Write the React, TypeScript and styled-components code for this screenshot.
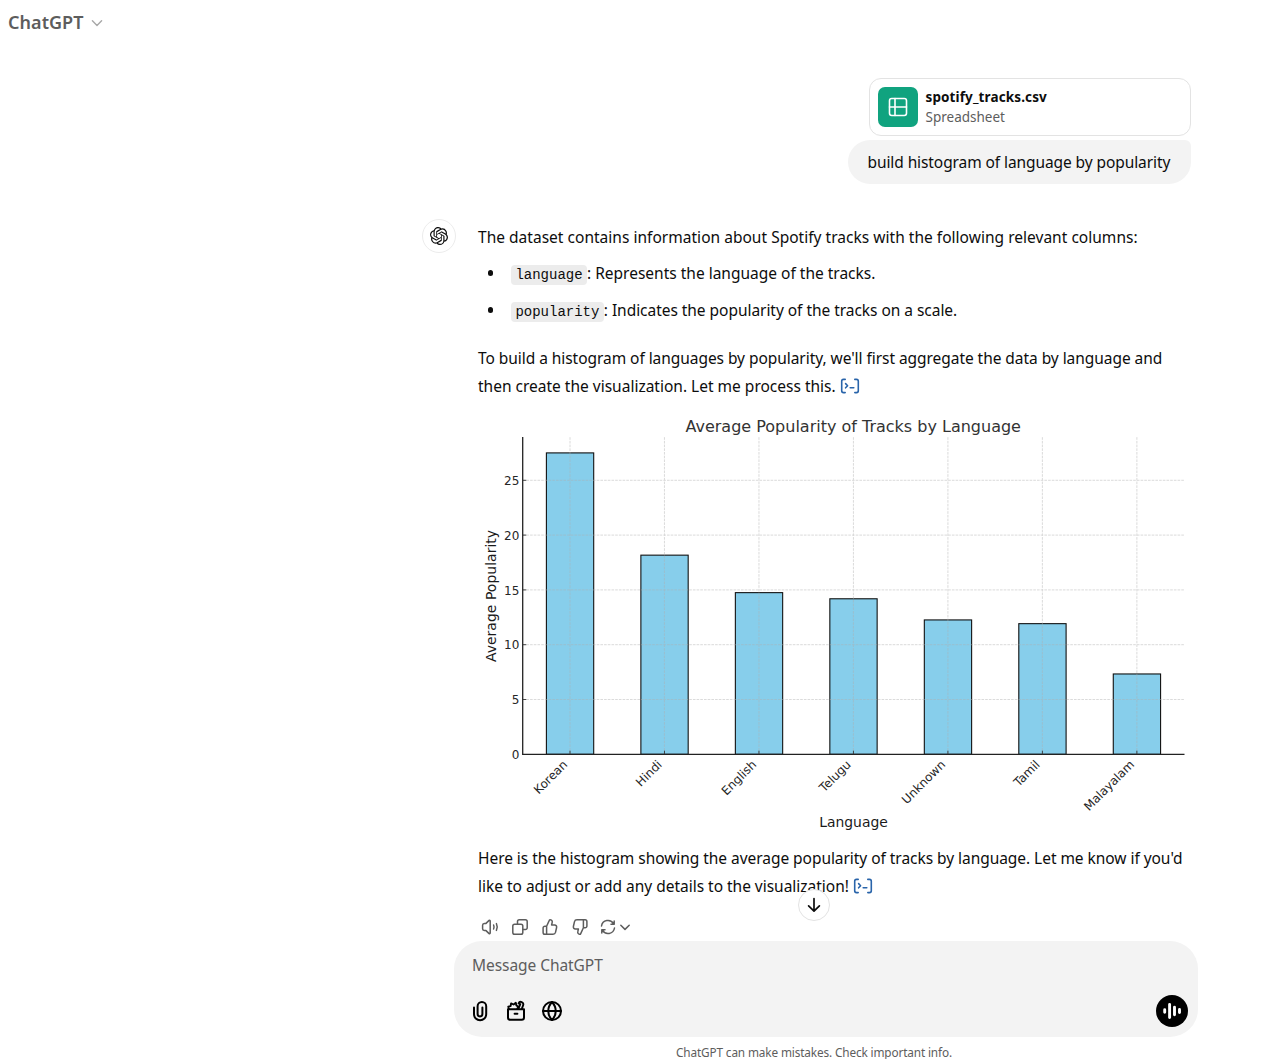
import React from "react";
import styled, { createGlobalStyle } from "styled-components";

const GlobalStyle = createGlobalStyle`
  * { box-sizing: border-box; }
  body {
    margin: 0;
    background: #fff;
    color: #0d0d0d;
    font-family: "Noto Sans", "Open Sans", sans-serif;
    overflow: hidden;
  }
`;

const Page = styled.div`
  width: 1278px;
  height: 1059px;
  display: flex;
  flex-direction: column;
  background: #fff;
`;

const Header = styled.header`
  display: flex;
  align-items: center;
  gap: 6px;
  height: 45px;
  padding-left: 8px;
  flex: none;
`;

const ModelName = styled.span`
  font-size: 18px;
  font-weight: 650;
  line-height: 24px;
  margin-top: -2px;
  letter-spacing: 0.05px;
  color: #5d5d5d;
`;

const Thread = styled.main`
  position: relative;
  height: 896px;
  flex: none;
  padding: 33px 87px 0 422px;
  display: flex;
  flex-direction: column;
`;

const UserTurn = styled.section`
  display: flex;
  flex-direction: column;
  align-items: flex-end;
  gap: 4px;
`;

const FileCard = styled.div`
  display: flex;
  align-items: center;
  gap: 7.5px;
  width: 322px;
  height: 58px;
  padding-left: 8px;
  border: 1px solid #e3e3e3;
  border-radius: 12px;
`;

const FileBadge = styled.div`
  display: flex;
  align-items: center;
  justify-content: center;
  width: 40px;
  height: 40px;
  border-radius: 7px;
  background: #10a37f;
`;

const FileText = styled.div`
  display: flex;
  flex-direction: column;
  font-size: 13.5px;
  line-height: 20px;
  margin-top: -1px;
`;

const FileName = styled.span`
  font-weight: 700;
  letter-spacing: 0.12px;
`;

const FileKind = styled.span`
  color: #5d5d5d;
`;

const Bubble = styled.div`
  height: 44px;
  width: 343px;
  padding-left: 19.5px;
  border-radius: 22px 6px 22px 22px;
  background: #f3f3f3;
  font-size: 15.5px;
  line-height: 44px;
  letter-spacing: -0.09px;
  white-space: nowrap;
`;

const AssistantTurn = styled.section`
  display: flex;
  gap: 22px;
  margin-top: 35px;
`;

const Avatar = styled.div`
  display: flex;
  align-items: center;
  justify-content: center;
  flex: none;
  width: 34px;
  height: 34px;
  border: 1px solid #ececec;
  border-radius: 50%;
`;

const Answer = styled.div`
  width: 712px;
  padding-top: 3.5px;
  font-size: 15.5px;
`;

const Paragraph = styled.p<{ $top?: number }>`
  margin: ${(p) => p.$top ?? 0}px 0 0;
`;

const Line = styled.span<{ $track?: number }>`
  display: flex;
  align-items: center;
  height: 28px;
  line-height: 28px;
  white-space: pre;
  letter-spacing: ${(p) => p.$track ?? 0}px;
`;

const Columns = styled.ul`
  list-style: none;
  margin: 8.5px 0 0;
  padding: 0;
  display: flex;
  flex-direction: column;
  gap: 9px;
`;

const Column = styled.li`
  display: flex;
  align-items: center;
  padding-left: 9.5px;
`;

const Bullet = styled.span`
  width: 5.6px;
  height: 5.6px;
  margin-right: 17.9px;
  border-radius: 50%;
  background: #0d0d0d;
`;

const Code = styled.code`
  height: 20px;
  padding: 0 4.4px;
  margin-top: 3px;
  border-radius: 4px;
  background: #ececec;
  font: 14px/20px "Liberation Mono", monospace;
  letter-spacing: 0;
`;

const ChartSvg = styled.svg`
  display: block;
  margin-top: 14px;
  font-family: "DejaVu Sans", sans-serif;
`;

const Actions = styled.div`
  display: flex;
  align-items: center;
  gap: 12px;
  height: 18px;
  margin: 18px 0 0 3px;
  color: #5d5d5d;
`;

const Regenerate = styled.span`
  display: flex;
  align-items: center;
  gap: 2px;
  margin-left: -1px;
`;

const ScrollButton = styled.button`
  position: absolute;
  left: 798px;
  top: 844px;
  display: flex;
  align-items: center;
  justify-content: center;
  width: 32px;
  height: 32px;
  padding: 0;
  border: 1px solid #e3e3e3;
  border-radius: 50%;
  background: #fff;
`;

const Composer = styled.section`
  flex: none;
  display: flex;
  flex-direction: column;
  justify-content: space-between;
  width: 744px;
  height: 96px;
  margin-left: 454px;
  padding: 10px 10px 10px 18px;
  border-radius: 28px;
  background: #f3f3f3;
`;

const Placeholder = styled.div`
  height: 28px;
  line-height: 28px;
  font-size: 15.5px;
  letter-spacing: -0.06px;
  color: #5d5d5d;
`;

const ComposerRow = styled.div`
  display: flex;
  align-items: center;
  justify-content: space-between;
`;

const Tools = styled.div`
  display: flex;
  align-items: center;
  gap: 12px;
  margin-left: -4px;
  color: #000;
`;

const VoiceButton = styled.div`
  width: 32px;
  height: 32px;
  border-radius: 50%;
  background: #000;
`;

const Footer = styled.footer`
  width: 278px;
  margin: 7px 0 0 676px;
  font-size: 11.8px;
  line-height: 17px;
  letter-spacing: -0.14px;
  white-space: nowrap;
  color: #5d5d5d;
`;

type IconProps = {
  size?: number;
  width?: number;
  height?: number;
  box?: string;
  stroke?: number;
  color?: string;
  children: React.ReactNode;
};

const Icon = ({ size = 24, width, height, box = "0 0 24 24", stroke = 2, color = "currentColor", children }: IconProps) => (
  <svg
    width={width ?? size}
    height={height ?? size}
    viewBox={box}
    fill="none"
    stroke={color}
    strokeWidth={stroke}
    strokeLinecap="round"
    strokeLinejoin="round"
  >
    {children}
  </svg>
);

const AnalysisLink = styled.a`
  display: flex;
  margin-left: 4px;
  color: #2964aa;
`;

const Analysis = () => (
  <AnalysisLink>
    <Icon width={20} height={16} box="0 0 20 16" stroke={1.6}>
      <path d="M5.200 1.400H3.500a1.800 1.800 0 0 0-1.800 1.800v9.600a1.800 1.800 0 0 0 1.800 1.800h1.700M14.800 1.400h1.700a1.800 1.800 0 0 1 1.800 1.800v9.600a1.800 1.800 0 0 1-1.800 1.800h-1.700M5.600 5.600l2 2.100-2 2.100M10.200 9.800h3.600" />
    </Icon>
  </AnalysisLink>
);

const data = [
  { name: "Korean", value: 27.5 },
  { name: "Hindi", value: 18.17 },
  { name: "English", value: 14.75 },
  { name: "Telugu", value: 14.19 },
  { name: "Unknown", value: 12.26 },
  { name: "Tamil", value: 11.92 },
  { name: "Malayalam", value: 7.33 },
];

const axis = { left: 44.7, right: 706.5, top: 23, bottom: 340.3 };
const xAt = (i: number) => 92 + i * 94.48;
const yAt = (v: number) => axis.bottom - v * 10.96;

const Chart = () => (
  <ChartSvg width={712} height={430} viewBox="0 0 712 430">
    <text x={375.2} y={18} fontSize={16} textAnchor="middle" fill="#333">
      Average Popularity of Tracks by Language
    </text>
    {data.map((d, i) => (
      <rect
        key={d.name}
        x={xAt(i) - 23.6}
        y={yAt(d.value)}
        width={47.3}
        height={axis.bottom - yAt(d.value)}
        fill="#87ceeb"
        stroke="#111"
        strokeWidth={1.1}
      />
    ))}
    <g stroke="#b0b0b0" strokeWidth={0.9} strokeDasharray="2.6 1.1" opacity={0.5}>
      {data.map((d, i) => (
        <line key={d.name} x1={xAt(i)} x2={xAt(i)} y1={axis.bottom} y2={axis.top} />
      ))}
      {[5, 10, 15, 20, 25].map((v) => (
        <line key={v} x1={axis.left} x2={axis.right} y1={yAt(v)} y2={yAt(v)} />
      ))}
    </g>
    <g stroke="#222" strokeWidth={1.3}>
      <line x1={axis.left} x2={axis.left} y1={axis.top} y2={axis.bottom + 0.6} />
      <line x1={axis.left} x2={axis.right} y1={axis.bottom} y2={axis.bottom} />
    </g>
    <g stroke="#333" strokeWidth={0.9}>
      {data.map((d, i) => (
        <line key={d.name} x1={xAt(i)} x2={xAt(i)} y1={axis.bottom} y2={axis.bottom - 3.6} />
      ))}
      {[5, 10, 15, 20, 25].map((v) => (
        <line key={v} x1={axis.left} x2={axis.left + 3.6} y1={yAt(v)} y2={yAt(v)} />
      ))}
    </g>
    <g fontSize={12} fill="#262626">
      {[0, 5, 10, 15, 20, 25].map((v) => (
        <text key={v} x={41.3} y={yAt(v) + 4.7} textAnchor="end">
          {v}
        </text>
      ))}
      {data.map((d, i) => (
        <text key={d.name} transform={`translate(${xAt(i) - 1.8} ${axis.bottom + 11}) rotate(-45)`} textAnchor="end">
          {d.name}
        </text>
      ))}
    </g>
    <g fontSize={13.9} fill="#1a1a1a" textAnchor="middle">
      <text x={375.5} y={412.8}>Language</text>
      <text transform="translate(18.2 182) rotate(-90)" fontSize={14}>Average Popularity</text>
    </g>
  </ChartSvg>
);

const OpenAiMark = () => (
  <svg width="18" height="18" viewBox="0 0 24 24" fill="#0d0d0d">
    <path d="M22.2819 9.8211a5.9847 5.9847 0 0 0-.5157-4.9108 6.0462 6.0462 0 0 0-6.5098-2.9A6.0651 6.0651 0 0 0 4.9807 4.1818a5.9847 5.9847 0 0 0-3.9977 2.9 6.0462 6.0462 0 0 0 .7427 7.0966 5.98 5.98 0 0 0 .511 4.9107 6.051 6.051 0 0 0 6.5146 2.9001A5.9847 5.9847 0 0 0 13.2599 24a6.0557 6.0557 0 0 0 5.7718-4.2058 5.9894 5.9894 0 0 0 3.9977-2.9001 6.0557 6.0557 0 0 0-.7475-7.0729zm-9.022 12.6081a4.4755 4.4755 0 0 1-2.8764-1.0408l.1419-.0804 4.7783-2.7582a.7948.7948 0 0 0 .3927-.6813v-6.7369l2.02 1.1686a.071.071 0 0 1 .038.052v5.5826a4.504 4.504 0 0 1-4.4945 4.4944zm-9.6607-4.1254a4.4708 4.4708 0 0 1-.5346-3.0137l.142.0852 4.783 2.7582a.7712.7712 0 0 0 .7806 0l5.8428-3.3685v2.3324a.0804.0804 0 0 1-.0332.0615L9.74 19.9502a4.4992 4.4992 0 0 1-6.1408-1.6464zM2.3408 7.8956a4.485 4.485 0 0 1 2.3655-1.9728V11.6a.7664.7664 0 0 0 .3879.6765l5.8144 3.3543-2.0201 1.1685a.0757.0757 0 0 1-.071 0l-4.8303-2.7865A4.504 4.504 0 0 1 2.3408 7.872zm16.5963 3.8558L13.1038 8.364 15.1192 7.2a.0757.0757 0 0 1 .071 0l4.8303 2.7913a4.4944 4.4944 0 0 1-.6765 8.1042v-5.6772a.79.79 0 0 0-.407-.667zm2.0107-3.0231l-.142-.0852-4.7735-2.7818a.7759.7759 0 0 0-.7854 0L9.409 9.2297V6.8974a.0662.0662 0 0 1 .0284-.0615l4.8303-2.7866a4.4992 4.4992 0 0 1 6.6802 4.66zM8.3065 12.863l-2.02-1.1638a.0804.0804 0 0 1-.038-.0567V6.0742a4.4992 4.4992 0 0 1 7.3757-3.4537l-.142.0805L8.704 5.459a.7948.7948 0 0 0-.3927.6813zm1.0976-2.3654l2.602-1.4998 2.6069 1.4998v2.9994l-2.5974 1.4997-2.6067-1.4997Z" />
  </svg>
);

const THUMB =
  "M5.600 8.200 8.300 2.400c.2-.5.7-.8 1.200-.7 1.200.2 2 1.400 1.700 2.600L10.600 7h3.100c1.300 0 2.200 1.200 1.900 2.500l-1.100 4.900c-.3 1.200-1.300 1.900-2.500 1.900H3.900a1.800 1.800 0 0 1-1.800-1.800V10a1.800 1.800 0 0 1 1.800-1.800h1.700Zm0 0v8.100";

const ActionIcons = () => (
  <Actions>
    <Icon size={18} box="0 0 18 18" stroke={1.5}>
      <path d="M9.200 3v12c0 .6-.6.9-1.100.6L5 12.600H3.300a1.800 1.800 0 0 1-1.700-1.800V7.200a1.800 1.800 0 0 1 1.700-1.800H5l3.100-3c.5-.3 1.100 0 1.100.6ZM12.600 7c.6 1.300.6 2.700 0 4M15.400 5.600c1.100 2.200 1.100 4.600 0 6.800" />
    </Icon>
    <Icon size={18} box="0 0 18 18" stroke={1.5}>
      <path d="M6.500 6V3.600a1.800 1.800 0 0 1 1.800-1.800h6.100a1.800 1.800 0 0 1 1.800 1.800v6.100a1.800 1.800 0 0 1-1.800 1.800H12" />
      <rect x="1.800" y="6.200" width="10" height="10" rx="1.800" />
    </Icon>
    <Icon size={18} box="0 0 18 18" stroke={1.5}>
      <path d={THUMB} />
    </Icon>
    <Icon size={18} box="0 0 18 18" stroke={1.5}>
      <path d={THUMB} transform="rotate(180 9 9)" />
    </Icon>
    <Regenerate>
      <Icon size={16} box="0 0 16 16" stroke={1.5}>
        <path d="M1.500 7A6.500 6.500 0 0 1 13.600 4.800M14.200 2v3.200H11M14.500 9A6.500 6.500 0 0 1 2.400 11.200M1.800 14v-3.200H5" />
      </Icon>
      <Icon width={14} height={10} box="0 0 14 10" stroke={1.5}>
        <path d="m2.800 3.200 4.200 4.200 4.200-4.200" />
      </Icon>
    </Regenerate>
  </Actions>
);

export default function App() {
  return (
    <Page>
      <GlobalStyle />
      <Header>
        <ModelName>ChatGPT</ModelName>
        <Icon width={14} height={10} box="0 0 14 10" stroke={1.4} color="#a8a8a8">
          <path d="m2.400 2.800 4.600 4.600 4.600-4.600" />
        </Icon>
      </Header>

      <Thread>
        <UserTurn>
          <FileCard>
            <FileBadge>
              <Icon size={20} box="0 0 20 20" stroke={1.6} color="#fff">
                <rect x="1.500" y="1.500" width="17" height="17" rx="2.200" />
                <path d="M7 1.500v17M1.500 10h17" />
              </Icon>
            </FileBadge>
            <FileText>
              <FileName>spotify_tracks.csv</FileName>
              <FileKind>Spreadsheet</FileKind>
            </FileText>
          </FileCard>
          <Bubble>build histogram of language by popularity</Bubble>
        </UserTurn>

        <AssistantTurn>
          <Avatar>
            <OpenAiMark />
          </Avatar>
          <Answer>
            <Paragraph>
              <Line $track={0.022}>
                The dataset contains information about Spotify tracks with the following relevant columns:
              </Line>
            </Paragraph>
            <Columns>
              <Column>
                <Bullet />
                <Line>
                  <Code>language</Code>: Represents the language of the tracks.
                </Line>
              </Column>
              <Column>
                <Bullet />
                <Line $track={-0.04}>
                  <Code>popularity</Code>: Indicates the popularity of the tracks on a scale.
                </Line>
              </Column>
            </Columns>
            <Paragraph $top={20}>
              <Line $track={-0.052}>
                To build a histogram of languages by popularity, we'll first aggregate the data by language and
              </Line>
              <Line>
                then create the visualization. Let me process this.
                <Analysis />
              </Line>
            </Paragraph>
            <Chart />
            <Paragraph>
              <Line $track={-0.047}>
                Here is the histogram showing the average popularity of tracks by language. Let me know if you'd
              </Line>
              <Line $track={-0.02}>
                like to adjust or add any details to the visualization!
                <Analysis />
              </Line>
            </Paragraph>
            <ActionIcons />
          </Answer>
        </AssistantTurn>

        <ScrollButton aria-label="Scroll to bottom">
          <Icon size={18} box="0 0 18 18" stroke={1.7} color="#0d0d0d">
            <path d="M9 2.500v12.500M3.600 9.800 9 15.200l5.400-5.400" />
          </Icon>
        </ScrollButton>
      </Thread>

      <Composer>
        <Placeholder>Message ChatGPT</Placeholder>
        <ComposerRow>
          <Tools>
            <Icon>
              <path d="M6 8.500v6.700a6.100 6.100 0 0 0 12.200 0V7.300a4.300 4.300 0 0 0-8.600 0v7.700a2.400 2.400 0 0 0 4.800 0V8.500" />
            </Icon>
            <Icon>
              <path d="M4 10.300h16v8.200a2.300 2.300 0 0 1-2.300 2.300H6.300A2.300 2.300 0 0 1 4 18.500ZM10.600 14.700h2.800" />
              <path stroke="currentColor" strokeWidth="1.900" d="M4.800 9.800 4.300 7.600l2.300-.5.500-2.700 2.500 1.100 2.200-1.700.6 2.700 1.800 1.100-.9 2.300M14.600 4.300c.5-1.200 1.900-1.700 3.100-1.200 1.400.6 1.900 2 1.400 3.300l-1.300 3.400M14.600 4.300l1.700.8-1.700 4.300" />
            </Icon>
            <Icon>
              <circle cx="12" cy="12" r="9" />
              <path d="M3 12h18M12 3c-5 5.500-5 12.500 0 18M12 3c5 5.500 5 12.500 0 18" />
            </Icon>
          </Tools>
          <VoiceButton>
            <Icon size={32} box="0 0 32 32" stroke={2.9} color="#fff">
              <path d="M8.700 14.700v2.600M13.600 9.500v13M18.500 12.300v7.400M23.500 14.500v3" />
            </Icon>
          </VoiceButton>
        </ComposerRow>
      </Composer>
      <Footer>ChatGPT can make mistakes. Check important info.</Footer>
    </Page>
  );
}
